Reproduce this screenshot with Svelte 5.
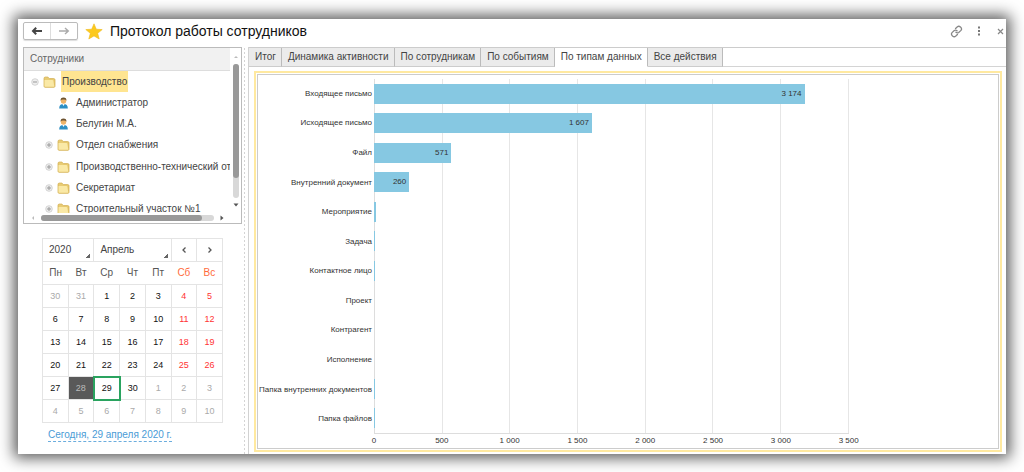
<script>
  const people = [
    { name: 'Администратор', kind: 'user' },
    { name: 'Белугин М.А.', kind: 'user' },
    { name: 'Отдел снабжения', kind: 'folder' },
    { name: 'Производственно-технический отдел', kind: 'folder' },
    { name: 'Секретариат', kind: 'folder' },
    { name: 'Строительный участок №1', kind: 'folder' },
  ];
  const tabs = ['Итог', 'Динамика активности', 'По сотрудникам', 'По событиям', 'По типам данных', 'Все действия'];
  let active = $state('По типам данных');

  const weekdays = ['Пн', 'Вт', 'Ср', 'Чт', 'Пт', 'Сб', 'Вс'];
  const days = [30, 31, ...Array.from({ length: 30 }, (_, i) => i + 1), ...Array.from({ length: 10 }, (_, i) => i + 1)];
  const weeks = Array.from({ length: 6 }, (_, w) =>
    days.slice(w * 7, w * 7 + 7).map((n, i) => {
      const outside = w * 7 + i < 2 || w * 7 + i > 31;
      return { n, outside, weekend: i > 4 && !outside, selected: n === 28 && !outside, today: n === 29 && !outside };
    })
  );

  const max = 3500;
  const ticks = [0, 500, 1000, 1500, 2000, 2500, 3000, 3500];
  const rows = [
    { label: 'Входящее письмо', value: 3174 },
    { label: 'Исходящее письмо', value: 1607 },
    { label: 'Файл', value: 571 },
    { label: 'Внутренний документ', value: 260 },
    { label: 'Мероприятие', value: 16 },
    { label: 'Задача', value: 10 },
    { label: 'Контактное лицо', value: 10 },
    { label: 'Проект', value: 0 },
    { label: 'Контрагент', value: 0 },
    { label: 'Исполнение', value: 0 },
    { label: 'Папка внутренних документов', value: 8 },
    { label: 'Папка файлов', value: 8 },
  ];
  const fmt = (n) => String(n).replace(/(\d)(\d{3})$/, '$1 $2');
</script>

{#snippet folder()}
  <svg class="folder" viewBox="0 0 12 11" aria-hidden="true">
    <path d="M1 9.500V2.200Q1 1 2 1H4.600L5.800 2.400H10Q11 2.400 11 3.400V9.500Q11 10.300 10.200 10.300H1.800Q1 10.300 1 9.500Z" fill="#e9cc73" stroke="#d3ae4b" stroke-width=".8" />
    <path d="M1.400 3.600H8.600Q9.300 3.600 9.500 4.300L10.500 9.900H2.200Q1.400 9.900 1.400 9.100Z" fill="#fae9a6" />
  </svg>
{/snippet}

{#snippet expander(open)}
  <button class="expander" aria-label={open ? 'Свернуть' : 'Развернуть'}>
    <svg viewBox="0 0 8 8" aria-hidden="true">
      <circle cx="4" cy="4" r="3.300" fill="#eee" stroke="#ccc" stroke-width=".8" />
      <path d={open ? 'M2 4H6' : 'M2 4H6M4 2V6'} stroke="#999" />
    </svg>
  </button>
{/snippet}

<main class="window">
  <header class="titlebar">
    <div class="history">
      <button aria-label="Назад"><svg viewBox="0 0 12 10" aria-hidden="true"><path d="M11 5H2.500M5.200 1.800L2 5L5.200 8.200" fill="none" stroke="#444" stroke-width="2" /></svg></button>
      <button aria-label="Вперед"><svg viewBox="0 0 12 10" aria-hidden="true"><path d="M1 5H10M7 2L10.300 5L7 8" fill="none" stroke="#aaa" stroke-width="1.400" /></svg></button>
    </div>
    <svg class="star" viewBox="0 0 18 17" aria-hidden="true"><path d="M9 .8L11.300 6.200L17.200 6.600L12.700 10.300L14.200 16L9 12.900L3.800 16L5.300 10.300L.8 6.600L6.700 6.200Z" fill="#fcc91c" stroke="#eebb20" stroke-width=".6" /></svg>
    <h1>Протокол работы сотрудников</h1>
    <div class="tools">
      <button aria-label="Ссылка"><svg class="link" viewBox="0 0 14 14" aria-hidden="true"><g fill="none" stroke="#888" stroke-width="1.400" stroke-linecap="round"><path d="M6 3.800L8 1.900Q9.500 .7 11.300 2.100Q13.300 4 11.800 5.800L9.400 8Q7.900 9.100 6.400 7.800" /><path d="M8 10.200L6 12.100Q4.500 13.300 2.700 11.900Q.7 10 2.200 8.200L4.600 6Q6.100 4.900 7.600 6.200" /></g></svg></button>
      <button aria-label="Меню"><svg class="dots" viewBox="0 0 4 10" aria-hidden="true"><path d="M1 .5h2v2H1zM1 4h2v2H1zM1 7.500h2v2H1z" fill="#777" /></svg></button>
      <button aria-label="Закрыть"><svg class="close" viewBox="0 0 7 7" aria-hidden="true"><path d="M1 1L6 6M6 1L1 6" stroke="#888" stroke-width="1.200" /></svg></button>
    </div>
  </header>

  <div class="body">
    <aside>
      <section class="tree" aria-label="Сотрудники">
        <div class="pane">
          <h2>Сотрудники</h2>
          <ul>
            <li class="root">{@render expander(true)}{@render folder()}<span class="current">Производство</span></li>
            {#each people as p}
              <li>
                {#if p.kind === 'folder'}
                  {@render expander(false)}{@render folder()}
                {:else}
                  <span class="expander"></span>
                  <svg class="folder" viewBox="0 0 12 11" aria-hidden="true">
                    <path d="M2 10.500Q2 6.500 6 6.500Q10 6.500 10 10.500Z" fill="#2d8fc4" />
                    <path d="M4.700 6L6 8.200L7.300 6Z" fill="#fff" />
                    <circle cx="6" cy="3.600" r="2.500" fill="#eeb469" />
                    <path d="M3.300 3.500Q3 .4 6 .4Q9 .4 8.700 3.500Q8 2.100 6 2.300Q4 2.100 3.300 3.500Z" fill="#6d5330" />
                  </svg>
                {/if}
                <span class="name">{p.name}</span>
              </li>
            {/each}
          </ul>
        </div>
        <div class="vbar" aria-hidden="true">
          <svg viewBox="0 0 6 4"><path d="M1 3L3 1L5 3Z" fill="#bbb" /></svg>
          <div class="vtrack"><div class="vthumb"></div></div>
          <svg viewBox="0 0 6 4"><path d="M.5 .5L3 3.500L5.500 .5Z" fill="#555" /></svg>
        </div>
        <div class="hbar" aria-hidden="true">
          <svg viewBox="0 0 4 6"><path d="M3 1L1 3L3 5Z" fill="#bbb" /></svg>
          <div class="htrack"><div class="hthumb"></div></div>
          <svg viewBox="0 0 4 6"><path d="M.5 .5L3.500 3L.5 5.500Z" fill="#555" /></svg>
        </div>
      </section>

      <table class="calendar">
        <thead>
          <tr>
            <td colspan="2" class="pick"><select aria-label="Год"><option>2020</option></select></td>
            <td colspan="3" class="pick"><select aria-label="Месяц"><option>Апрель</option></select></td>
            <td><button aria-label="Предыдущий месяц"><svg viewBox="0 0 6 8" aria-hidden="true"><path d="M4.500 1.500L2 4L4.500 6.500" fill="none" stroke="#555" stroke-width="1.300" /></svg></button></td>
            <td><button aria-label="Следующий месяц"><svg viewBox="0 0 6 8" aria-hidden="true"><path d="M1.500 1.500L4 4L1.500 6.500" fill="none" stroke="#555" stroke-width="1.300" /></svg></button></td>
          </tr>
          <tr class="names">
            {#each weekdays as d, i}<th scope="col" class:rest={i > 4}>{d}</th>{/each}
          </tr>
        </thead>
        <tbody>
          {#each weeks as week}
            <tr>
              {#each week as d}
                <td class:outside={d.outside} class:weekend={d.weekend} class:selected={d.selected} class:today={d.today}><button>{d.n}</button></td>
              {/each}
            </tr>
          {/each}
        </tbody>
      </table>
      <a class="now" href="#today">Сегодня, 29 апреля 2020 г.</a>
    </aside>

    <div class="splitter"></div>

    <section class="report">
      <div class="tabs" role="tablist">
        {#each tabs as t}
          <button role="tab" aria-selected={t === active} class:active={t === active} onclick={() => (active = t)}>{t}</button>
        {/each}
        <div class="rest-line"></div>
      </div>
      <div class="frame">
        <div class="chart">
          <div class="labels">
            {#each rows as r}<div>{r.label}</div>{/each}
          </div>
          <div class="plot">
            <div class="gridlines">{#each ticks.slice(1) as t}<i></i>{/each}</div>
            <div class="bars">
              {#each rows as r}
                <div class="row"><div class="bar" style:width="{(r.value / max) * 100}%">{r.value > 100 ? fmt(r.value) : ''}</div></div>
              {/each}
            </div>
          </div>
          <div class="axis">
            {#each ticks as t}<div><span>{fmt(t)}</span></div>{/each}
          </div>
        </div>
      </div>
    </section>
  </div>
</main>

<style>
  :global(body) { background: #fff; }
  * { box-sizing: border-box; }
  button, select { font: inherit; color: inherit; border: 0; background: none; padding: 0; margin: 0; }
  button { display: flex; align-items: center; justify-content: center; }
  h1, h2, ul { margin: 0; padding: 0; font-weight: normal; }
  svg { display: block; flex: none; }

  .window {
    display: flex; flex-direction: column;
    margin: 19px 18px 18px; min-height: calc(100vh - 37px);
    background: #fff; color: #444;
    font: 10px/14px "Liberation Sans", Arial, sans-serif;
    box-shadow: 0 0 14px 4px rgba(0, 0, 0, .65);
  }
  .titlebar { display: flex; align-items: center; height: 28px; padding: 0 2px 4px 5px; }
  .history { display: flex; width: 55px; height: 18px; border: 1px solid #bbb; border-radius: 2px; box-shadow: 0 1px 1px #ddd; }
  .history button { flex: 1; }
  .history button + button { border-left: 1px solid #ddd; }
  .history svg { width: 12px; height: 10px; }
  .star { width: 18px; height: 17px; margin: 0 7px; }
  h1 { font-size: 14px; line-height: 18px; color: #111; flex: 1; white-space: nowrap; }
  .tools { display: flex; align-items: center; gap: 14px; }
  .link { width: 13px; height: 13px; }
  .dots { width: 4px; height: 10px; }
  .close { width: 7px; height: 7px; }
  .tools button:last-child { margin-left: 2px; }

  .body { flex: 1; display: flex; }
  aside { flex: none; width: 224px; padding-left: 5px; display: flex; flex-direction: column; }
  .tree { display: grid; grid-template: minmax(0, 1fr) 10px / minmax(0, 1fr) 11px; height: 177px; border: 1px solid #bbb; }
  .pane { overflow: hidden; }
  h2 { height: 23px; padding: 4px 6px; font-size: 10px; color: #666; background: #f1f1f1; border-bottom: 1px solid #ddd; }
  ul { display: grid; grid-template-rows: repeat(7, 1fr); height: 149px; list-style: none; }
  li { display: flex; align-items: center; padding-left: 21px; white-space: nowrap; }
  .name { padding-left: 6px; }
  .root { padding-left: 7px; }
  .current { align-self: stretch; display: flex; align-items: center; background: #ffe591; margin-left: 5px; padding: 0 1px; }
  .expander { width: 8px; height: 8px; flex: none; margin-right: 4px; }
  .expander svg { width: 8px; height: 8px; }
  .folder { width: 13px; height: 12px; }
  .vbar { display: flex; flex-direction: column; align-items: center; gap: 5px; padding: 7px 0 6px; }
  .vbar svg { width: 6px; height: 4px; }
  .vtrack { flex: 1; width: 6px; border-radius: 3px; background: #d8d8d8; }
  .vthumb { height: 85%; border-radius: 3px; background: #999; }
  .hbar { grid-column: 1 / -1; display: flex; align-items: center; gap: 6px; padding: 0 17px 0 7px; }
  .hbar svg { width: 4px; height: 6px; }
  .htrack { flex: 1; height: 6px; border-radius: 3px; background: #d8d8d8; }
  .hthumb { width: 93%; height: 6px; border-radius: 3px; background: #999; }

  .calendar { width: 181px; margin: 14px 0 0 19px; border-collapse: collapse; table-layout: fixed; }
  .calendar tr { height: 23px; }
  .calendar td, .calendar th { padding: 0; border: 1px solid #e4e4e4; text-align: center; vertical-align: middle; font-weight: normal; }
  .calendar button { width: 100%; height: 20px; }
  .calendar svg { width: 6px; height: 8px; }
  .calendar .names th { border-left: 0; border-right: 0; color: #555; }
  .calendar .names th:first-child { border-left: 1px solid #e4e4e4; }
  .calendar .names th:last-child { border-right: 1px solid #e4e4e4; }
  .calendar .names .rest { color: #ff6a3c; }
  .calendar tbody { color: #111; }
  .calendar tbody td { font-size: 9px; }
  .calendar tbody .outside { color: #aaa; }
  .calendar .weekend { color: #f33; }
  .calendar .selected { background: #595959; color: #bbb; }
  .calendar .today { border: 2px solid #2aa35f; }
  .calendar .pick { background: linear-gradient(135deg, transparent 50%, #666 50%) no-repeat right 3px bottom 3px / 4px 4px; }
  select { appearance: none; display: block; width: 100%; padding: 0 6px; }
  .now { align-self: flex-start; margin: 5px 0 0 25px; line-height: 13px; color: #4a9bd6; text-decoration: none; border-bottom: 1px dashed #6badde; }

  .splitter { flex: none; width: 7px; border-right: 1px solid #d2d2d2; background: radial-gradient(circle, #d4d4d4 1px, transparent 1px) 1px 0 / 3px 4px repeat-y; }

  .report { flex: 1; min-width: 0; display: flex; flex-direction: column; }
  .tabs { display: flex; height: 20px; border-top: 1px solid #ccc; }
  .tabs button { padding: 0 5px 0 6px; background: #ebebeb; border-right: 1px solid #bbb; border-bottom: 1px solid #ccc; white-space: nowrap; }
  .tabs .active { background: #fff; border-bottom-color: #fff; }
  .rest-line { flex: 1; border-bottom: 1px solid #d4d4d4; }
  .frame { flex: 1; display: flex; margin: 4px 4px 2px 5px; padding: 1px; border: 2px solid #ffe9a0; }
  .chart {
    flex: 1; min-width: 0; display: grid;
    grid-template: minmax(0, 1fr) 14px / 116px minmax(0, 474fr) minmax(0, 149fr);
    padding-top: 4px; border: 1px solid #ccc; font-size: 8px; line-height: 10px; color: #333;
  }
  .labels { display: flex; flex-direction: column; }
  .labels div { flex: 1; display: flex; align-items: center; justify-content: flex-end; padding-right: 2px; white-space: nowrap; }
  .plot { display: grid; border-left: 1px solid #ddd; border-bottom: 1px solid #ddd; }
  .gridlines, .bars { grid-area: 1 / 1; }
  .gridlines { display: flex; }
  .gridlines i { flex: 1; border-right: 1px solid #e6e6e6; }
  .bars { display: flex; flex-direction: column; margin-left: -1px; }
  .row { flex: 1; display: flex; align-items: center; }
  .bar { height: 20px; background: #86c8e2; display: flex; align-items: center; justify-content: flex-end; }
  .bar:not(:empty) { padding-right: 3px; }
  .axis { grid-column: 2; display: flex; justify-content: space-between; align-items: center; }
  .axis div { width: 0; display: flex; justify-content: center; white-space: nowrap; }
</style>
